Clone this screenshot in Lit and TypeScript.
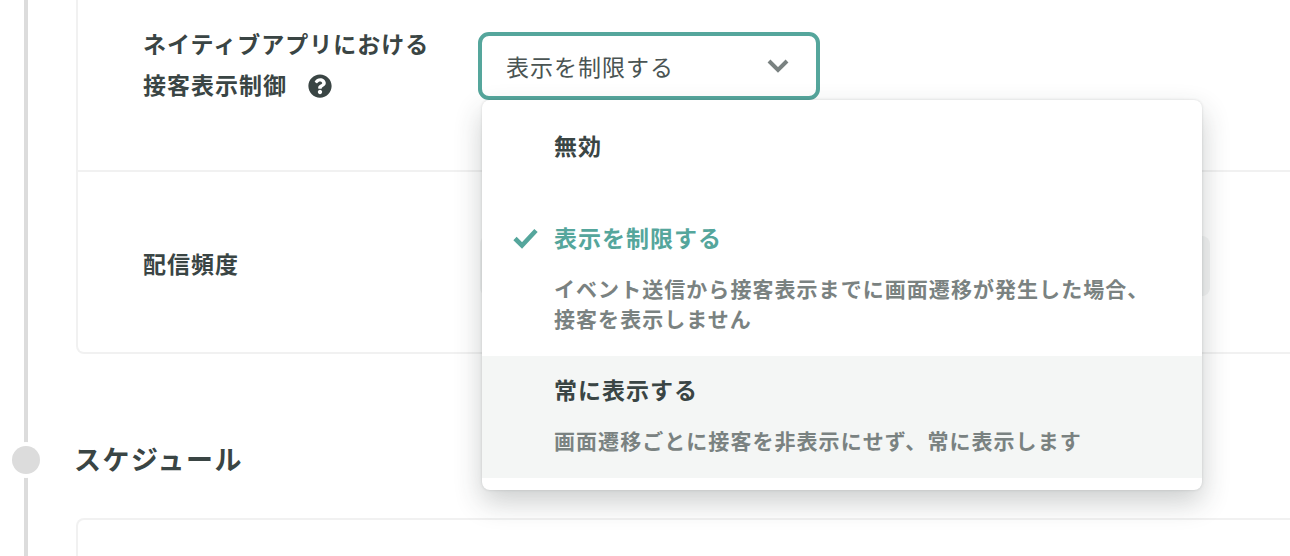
import { LitElement, css, html, svg } from 'lit';
import { customElement, state } from 'lit/decorators.js';

const QUESTION =
  'M504 256c0 136.997-111.043 248-248 248S8 392.997 8 256C8 119.083 119.043 8 256 8s248 111.083 248 248zM262.655 90c-54.497 0-89.255 22.957-116.549 63.758-3.536 5.286-2.353 12.415 2.715 16.258l34.699 26.31c5.205 3.947 12.621 3.008 16.665-2.122 17.864-22.658 30.113-35.797 57.303-35.797 20.429 0 45.698 13.148 45.698 32.958 0 14.976-12.363 22.667-32.534 33.976C247.128 238.528 216 254.941 216 296v4c0 6.627 5.373 12 12 12h56c6.627 0 12-5.373 12-12v-1.333c0-28.462 83.186-29.647 83.186-106.667 0-58.002-60.165-102-116.531-102zM256 338c-25.365 0-46 20.635-46 46 0 25.364 20.635 46 46 46s46-20.636 46-46c0-25.365-20.635-46-46-46z';

interface Option {
  title: string;
  desc: string[];
}

const OPTIONS: Option[] = [
  { title: '無効', desc: [] },
  {
    title: '表示を制限する',
    desc: ['イベント送信から接客表示までに画面遷移が発生した場合、', '接客を表示しません'],
  },
  { title: '常に表示する', desc: ['画面遷移ごとに接客を非表示にせず、常に表示します'] },
];

@customElement('app-root')
export class AppRoot extends LitElement {
  @state() private _selected = 1;
  @state() private _hover = 2;

  static styles = css`
    :host {
      display: block;
      height: 556px;
      overflow: hidden;
      background: #fff;
      color: #3a4544;
      font-family: 'Noto Sans CJK JP', 'Noto Sans', sans-serif;
    }
    .page {
      display: flex;
      height: 556px;
    }
    .rail {
      position: relative;
      flex: 0 0 76px;
    }
    .rail::before {
      content: '';
      position: absolute;
      left: 24px;
      top: 0;
      bottom: 0;
      width: 4px;
      background: #dcdcdc;
    }
    .dot {
      position: absolute;
      left: 12px;
      top: 446px;
      width: 28px;
      height: 28px;
      border-radius: 50%;
      background: #dcdcdc;
      box-shadow: 0 0 0 4px #fff;
    }
    .main {
      flex: 1;
      min-width: 0;
    }
    .card {
      margin-right: -20px;
      border: 2px solid #f1f1f1;
      border-top: none;
      border-radius: 0 0 8px 8px;
    }
    .row {
      display: grid;
      grid-template-columns: 335px 1fr;
      align-items: start;
      padding-left: 65px;
    }
    .row.first {
      height: 172px;
      padding-top: 24px;
      box-sizing: border-box;
      border-bottom: 2px solid #f1f1f1;
    }
    .row.second {
      height: 180px;
      box-sizing: border-box;
      padding-top: 64px;
    }
    .label {
      font-size: 23px;
      font-weight: 700;
      line-height: 41px;
      letter-spacing: 1px;
      margin-top: -1px;
    }
    .second .label {
      line-height: 54px;
      margin-top: 0;
    }
    .help {
      display: inline-block;
      width: 24px;
      height: 24px;
      margin-left: 21px;
      vertical-align: -4px;
      fill: #3a4544;
    }
    .control {
      position: relative;
      width: 342px;
      margin-top: 8px;
    }
    .select {
      display: flex;
      align-items: center;
      justify-content: space-between;
      box-sizing: border-box;
      height: 68px;
      padding: 0 26px 0 24px;
      border: 4px solid #55a69c;
      border-radius: 11px;
      background: #fff;
      font-size: 23px;
      letter-spacing: 1px;
      color: #4a5453;
    }
    .chevron {
      width: 24px;
      height: 16px;
      fill: none;
      stroke: #7a8281;
      stroke-width: 4;
    }
    .menu {
      position: absolute;
      left: 4px;
      top: 100%;
      z-index: 2;
      width: 720px;
      padding: 12px 0;
      border-radius: 8px;
      background: #fff;
      box-shadow: 0 0 3px rgba(40, 50, 50, 0.16), 0 12px 28px rgba(40, 50, 50, 0.24);
    }
    .item {
      display: grid;
      grid-template-columns: 43px 1fr;
      padding: 20px 0 23px 30px;
    }
    .item.hover {
      background: #f4f6f5;
    }
    .check {
      display: block;
      width: 26px;
      height: 30px;
      margin-top: -1px;
      fill: none;
      stroke: #55a69c;
      stroke-width: 4.6;
    }
    .title {
      margin: -2px 0 0 -1px;
      font-size: 23px;
      font-weight: 700;
      line-height: 30px;
      letter-spacing: 1px;
    }
    .item.on .title {
      color: #55a69c;
    }
    .desc {
      margin-top: 21px;
      margin-left: -1px;
      font-size: 21px;
      font-weight: 700;
      line-height: 30px;
      letter-spacing: 1.05px;
      color: #7a8281;
      white-space: nowrap;
    }
    .ghost {
      width: 730px;
      height: 60px;
      margin-left: 2px;
      border-radius: 8px;
      background: #f4f5f5;
    }
    .section {
      margin: 0 0 0 -2px;
      font-size: 27px;
      font-weight: 700;
      line-height: 40px;
      letter-spacing: 1.5px;
      padding-top: 85px;
    }
    .next {
      margin-top: 39px;
      margin-right: -20px;
      height: 60px;
      border: 2px solid #f1f1f1;
      border-bottom: none;
      border-radius: 8px 8px 0 0;
    }
  `;

  private _renderItem(o: Option, i: number) {
    const on = i === this._selected;
    const hover = i === this._hover;
    return html`
      <div class="item ${on ? 'on' : ''} ${hover ? 'hover' : ''}">
        <span>
          ${on
            ? html`<svg class="check" viewBox="0 0 26 30">
                ${svg`<polyline points="3,15.5 10,22.5 24,7.5" />`}
              </svg>`
            : ''}
        </span>
        <div>
          <div class="title">${o.title}</div>
          <div class="desc">${o.desc.map((d) => html`${d}<br />`)}</div>
        </div>
      </div>
    `;
  }

  render() {
    return html`
      <div class="page">
        <div class="rail"><div class="dot"></div></div>
        <div class="main">
          <div class="card">
            <div class="row first">
              <div class="label">
                ネイティブアプリにおける<br />接客表示制御<svg class="help" viewBox="0 0 512 512">
                  ${svg`<path d=${QUESTION} />`}
                </svg>
              </div>
              <div class="control">
                <div class="select">
                  <span>表示を制限する</span>
                  <svg class="chevron" viewBox="0 0 24 16">
                    ${svg`<polyline points="3,3 12,12 21,3" />`}
                  </svg>
                </div>
                <div class="menu">${OPTIONS.map((o, i) => this._renderItem(o, i))}</div>
              </div>
            </div>
            <div class="row second">
              <div class="label">配信頻度</div>
              <div class="ghost"></div>
            </div>
          </div>
          <h2 class="section">スケジュール</h2>
          <div class="next"></div>
        </div>
      </div>
    `;
  }
}

declare global {
  interface HTMLElementTagNameMap {
    'app-root': AppRoot;
  }
}
